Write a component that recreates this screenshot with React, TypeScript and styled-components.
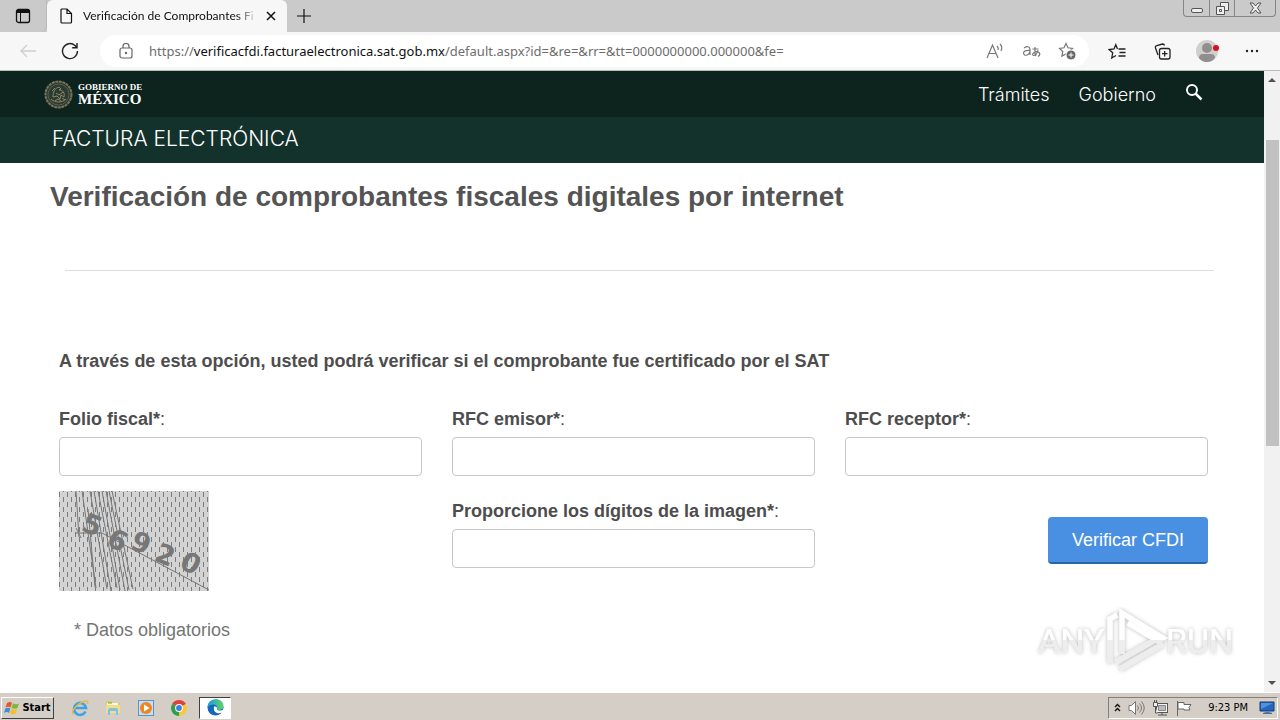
import React from "react";
import styled, { createGlobalStyle } from "styled-components";

const GlobalStyle = createGlobalStyle`
  * { box-sizing: border-box; }
  body { margin: 0; background: #fff; }
  button, input { font: inherit; }
`;

const sans = `"Liberation Sans", Arial, sans-serif`;
const browserFont = `"Noto Sans", "Open Sans", sans-serif`;
const siteFont = `Inter, "Open Sans", sans-serif`;
const systemFont = `"DejaVu Sans Condensed", "DejaVu Sans", sans-serif`;

const Screen = styled.div`
  display: flex;
  flex-direction: column;
  min-height: 100vh;
  font-family: ${sans};
`;

const IconButton = styled.button<{ $width?: number }>`
  display: flex;
  align-items: center;
  justify-content: center;
  width: ${(p) => p.$width ?? 24}px;
  height: 24px;
  padding: 0;
  border: 0;
  background: none;
  color: #222;
  flex: none;
`;

/* Tab strip */
const TabStrip = styled.header`
  display: flex;
  align-items: flex-end;
  height: 32px;
  background: #cacaca;
  font-family: ${browserFont};
`;

const TabMenu = styled.div`
  display: flex;
  align-items: center;
  justify-content: center;
  width: 47px;
  height: 32px;
  border-radius: 0 0 6px 0;
  border-right: 1px solid #b9b9b9;
`;

const Tab = styled.div`
  display: flex;
  align-items: center;
  width: 240px;
  height: 32px;
  padding: 0 2px 0 11px;
  border-radius: 6px 6px 0 0;
  background: #f7f7f7;
`;

const TabTitle = styled.span`
  flex: 1;
  min-width: 0;
  margin-left: 9px;
  white-space: nowrap;
  font-family: Lato, ${browserFont};
  font-size: 12px;
  line-height: 20px;
  color: #111;
  mask-image: linear-gradient(to right, #000 88%, transparent);
`;

const WindowControls = styled.div`
  display: flex;
  align-self: flex-start;
  height: 17px;
  margin: 0 4px 0 auto;
  border: 1px solid #858585;
  border-top: 0;
  border-radius: 0 0 4px 4px;
`;

const WindowButton = styled.button<{ $width: number }>`
  display: flex;
  align-items: center;
  justify-content: center;
  width: ${(p) => p.$width}px;
  padding: 0;
  border: 0;
  background: none;
  & + & { border-left: 1px solid #858585; }
`;

/* Address bar */
const Toolbar = styled.div`
  display: flex;
  align-items: center;
  height: 39px;
  padding: 0 16px;
  border-bottom: 1px solid #b7beba;
  background: #f7f7f7;
`;

const AddressBar = styled.form`
  display: flex;
  flex: 1;
  align-items: center;
  height: 32px;
  min-width: 0;
  margin-right: 16px;
  padding: 0 10px 0 14px;
  border-radius: 16px;
  background: #fff;
`;

const AddressText = styled.div`
  flex: 1;
  min-width: 0;
  margin-left: 11px;
  overflow: hidden;
  white-space: nowrap;
  font-family: ${browserFont};
  font-size: 13px;
  line-height: 20px;
  color: #6d6d6d;
  b { font-weight: 400; color: #111; }
`;

const AddressTools = styled.div`
  display: flex;
  gap: 12px;
`;

const BrowserTools = styled.div`
  display: flex;
  gap: 21px;
`;

/* Page viewport */
const Viewport = styled.div`
  display: flex;
  flex: 1;
`;

const Page = styled.div`
  position: relative;
  flex: 1;
  min-width: 0;
  background: #fff;
`;

const GovernmentBar = styled.div`
  display: flex;
  align-items: center;
  justify-content: space-between;
  height: 46px;
  padding: 0 61px 0 44px;
  background: #0c231e;
`;

const Brand = styled.a`
  display: flex;
  align-items: center;
  gap: 5px;
  color: #fff;
  text-decoration: none;
`;

const BrandText = styled.span`
  display: flex;
  flex-direction: column;
  font-family: "Liberation Serif", serif;
  font-weight: 700;
  font-size: 15px;
  line-height: 14px;
  small { font-size: 9px; line-height: 9px; }
`;

const Nav = styled.nav`
  display: flex;
  align-items: center;
  gap: 29px;
  font-family: ${siteFont};
  font-size: 18px;
  font-weight: 300;
  a { color: #fff; text-decoration: none; }
`;

const SectionBar = styled.div`
  height: 46px;
  padding: 0 52px;
  background: #13322b;
  font-family: ${siteFont};
  font-size: 21px;
  font-weight: 300;
  line-height: 44px;
  color: #fff;
`;

const Title = styled.h1`
  margin: 0;
  padding: 16px 50px 0;
  font-size: 28px;
  line-height: 36px;
  color: #545454;
`;

const Divider = styled.hr`
  height: 1px;
  margin: 55px 50px 0 65px;
  border: 0;
  background: #dedede;
`;

const Content = styled.form`
  padding: 78px 56px 0 59px;
  font-size: 18px;
  line-height: 24px;
  color: #4d4d4d;
`;

const Intro = styled.p`
  margin: 0 0 34px;
  font-weight: 700;
`;

const FieldGrid = styled.div`
  display: grid;
  grid-template-columns: repeat(3, minmax(0, 1fr));
  gap: 15px 30px;
`;

const Field = styled.label`
  display: flex;
  flex-direction: column;
  gap: 6px;
`;

const FieldInput = styled.input`
  width: 100%;
  height: 39px;
  padding: 6px 12px;
  border: 1px solid #c8c8c8;
  border-radius: 4px;
  background: #fff;
  color: #555;
`;

const Captcha = styled.svg`
  display: block;
  width: 150px;
  height: 100px;
`;

const CaptchaField = styled.div`
  padding-top: 8px;
`;

const SubmitCell = styled.div`
  display: flex;
  justify-content: flex-end;
  padding-top: 26px;
`;

const SubmitButton = styled.button`
  width: 160px;
  height: 47px;
  padding: 0;
  border: 0;
  border-bottom: 2px solid #2568a5;
  border-radius: 4px;
  background: #4a90e2;
  color: #fff;
`;

const Required = styled.p`
  margin: 27px 0 0 15px;
  color: #757575;
`;

const Watermark = styled.div`
  position: absolute;
  right: 26px;
  bottom: 16px;
  width: 204px;
  height: 70px;
`;

/* Scroll bar */
const ScrollTrack = styled.div`
  display: flex;
  flex-direction: column;
  align-items: center;
  width: 16px;
  background: #f1f1f1;
`;

const ScrollArrow = styled.div`
  display: flex;
  align-items: center;
  justify-content: center;
  height: 17px;
`;

const ScrollThumb = styled.div`
  width: 13px;
  height: 306px;
  margin: 52px 0 auto;
  background: #c1c1c1;
`;

/* Taskbar */
const Taskbar = styled.footer`
  display: flex;
  align-items: center;
  height: 28px;
  padding: 2px 2px 0 0;
  border-top: 1px solid #fff;
  background: #d5cec6;
  font-family: ${systemFont};
`;

const StartButton = styled.button`
  display: flex;
  align-items: center;
  justify-content: center;
  gap: 1px;
  width: 53px;
  height: 22px;
  margin: 0 13px 0 1px;
  padding: 0;
  border: 1px solid;
  border-color: #fff #404040 #404040 #fff;
  background: #d5cec6;
  font-size: 11px;
  font-weight: 700;
`;

const TaskButton = styled.button<{ $active?: boolean }>`
  display: flex;
  align-items: center;
  justify-content: center;
  width: ${(p) => (p.$active ? 32 : 26)}px;
  height: 22px;
  margin-right: ${(p) => (p.$active ? 0 : 7)}px;
  padding: 0;
  border: 1px solid;
  border-color: ${(p) => (p.$active ? "#404040 #fff #fff #404040" : "transparent")};
  background: ${(p) => (p.$active ? "#fff" : "none")};
`;

const Tray = styled.div`
  display: flex;
  align-items: center;
  gap: 7px;
  height: 22px;
  margin-left: auto;
  padding: 0 2px 0 5px;
  border: 1px solid;
  border-color: #808080 #fff #fff #808080;
  font-size: 11px;
  white-space: nowrap;
`;

const Clock = styled.time`
  margin: 0 4px 0 8px;
`;

const CAPTCHA_LINES = [
  [17, 0, 20, 46], [23, 0, 37, 97], [31, 0, 48, 98], [35, 0, 52, 100],
  [39, 0, 58, 97], [43, 0, 61, 99], [47, 0, 66, 100], [50, 0, 70, 99],
  [53, 0, 74, 98], [29, 18, 36, 96],
];

const CAPTCHA_DIGITS = [
  { digit: "5", x: 21, y: 39, angle: 22 },
  { digit: "6", x: 46, y: 53, angle: 28 },
  { digit: "9", x: 70, y: 57, angle: 22 },
  { digit: "2", x: 94, y: 69, angle: 22 },
  { digit: "0", x: 119, y: 76, angle: 28 },
];

const CaptchaImage = () => (
  <Captcha viewBox="0 0 150 100" role="img" aria-label="Imagen de verificación">
    <defs>
      <pattern id="dashes" width="8" height="10" patternUnits="userSpaceOnUse">
        <path d="M.5 1v5M4.5 0v1M4.5 6v4" stroke="#7c7c7c" />
      </pattern>
    </defs>
    <rect width="150" height="100" fill="#d3d3d3" />
    <rect width="150" height="100" fill="url(#dashes)" />
    <g stroke="#777" strokeWidth="1">
      {CAPTCHA_LINES.map(([x1, y1, x2, y2]) => (
        <line key={`${x1}-${x2}`} x1={x1} y1={y1} x2={x2} y2={y2} />
      ))}
      <path d="M16 42h27L150 99M17 37l5 10" fill="none" />
    </g>
    <g fill="#777" fontFamily="DejaVu Sans, sans-serif" fontSize="27" fontWeight="700">
      {CAPTCHA_DIGITS.map(({ digit, x, y, angle }) => (
        <text key={digit} x={x} y={y} transform={`rotate(${angle} ${x} ${y})`}>{digit}</text>
      ))}
    </g>
  </Captcha>
);

const Seal = () => (
  <svg width="29" height="29" viewBox="0 0 29 29" fill="none" stroke="#77745c">
    <circle cx="14.5" cy="14.5" r="13" fill="#2b3b31" strokeWidth="2" strokeDasharray="3 .6" />
    <circle cx="14.5" cy="14.5" r="10.5" stroke="#5f5d4a" />
    <path d="M7 19c4 4 11 4 15 0M9 17c0-5 2-9 6-10l2 2-2 1c4 0 6 3 5 7l-3-2-1 4-3-3-4 1M12 13l3 2 4-3M8 11l3-3M18 18l3 2M11 21l3-2 3 2" stroke="#8d8769" />
  </svg>
);

const WindowsFlag = () => (
  <svg width="17" height="16" viewBox="0 0 17 16">
    <path d="M3 3q3-2 5 0L6.500 7.500q-2-1.500-5 0z" fill="#e8582a" />
    <path d="M9 3.300q3 1.700 6 .2L13.500 8q-3 1.500-6 0z" fill="#7db83c" />
    <path d="M1.300 8.500q3-1.500 5 0L5 13q-2-1.800-5 0z" fill="#3d8ed8" />
    <path d="M7.200 9q3 1.500 6 0L12 13.500q-3 1.500-6-.2z" fill="#f6bd2b" />
  </svg>
);

const ExplorerIcon = () => (
  <svg width="18" height="18" viewBox="0 0 18 18" fill="none">
    <path d="M14.500 12.500A6 6 0 1 1 15 9H4.500" stroke="#3fa2e4" strokeWidth="2.600" />
    <path d="M2 15.500C-1 13 8 2 15.500 2q2 0 1 3" stroke="#e9b93a" strokeWidth="1.300" />
  </svg>
);

const FolderIcon = () => (
  <svg width="16" height="17" viewBox="0 0 16 17">
    <path d="M1 2h6l1 2h7v10H1z" fill="#e6c766" />
    <path d="M2 4h11v3H2z" fill="#fff8d8" />
    <path d="M1 6h14v8H1z" fill="#f2dc8d" />
    <path d="M3 16v-5q0-2 2-2h6q2 0 2 2v5h-2v-4H5v4z" fill="#7cc3e0" />
    <path d="M3 4h4" stroke="#65a84a" />
  </svg>
);

const PlayerIcon = () => (
  <svg width="16" height="16" viewBox="0 0 16 16">
    <rect x=".5" y=".5" width="15" height="15" fill="#c6def2" stroke="#5b94c9" />
    <circle cx="8" cy="8" r="6" fill="#f28420" />
    <path d="M6 4.500v7L11.500 8z" fill="#fff" />
  </svg>
);

const ChromeIcon = () => (
  <svg width="16" height="16" viewBox="0 0 16 16">
    <path d="M8 8L1.100 4a8 8 0 0 1 13.800 0z" fill="#dd4437" />
    <path d="M8 8l6.900-4A8 8 0 0 1 8 16z" fill="#f8c934" />
    <path d="M8 8v8A8 8 0 0 1 1.100 4z" fill="#2f9e4f" />
    <circle cx="8" cy="8" r="3.900" fill="#fff" />
    <circle cx="8" cy="8" r="2.900" fill="#3d7de4" />
  </svg>
);

const EdgeIcon = () => (
  <svg width="17" height="17" viewBox="0 0 17 17">
    <defs>
      <linearGradient id="edgeTop" x1="0" y1="0" x2="1" y2="0">
        <stop stopColor="#1b9de2" />
        <stop offset="1" stopColor="#5fd264" />
      </linearGradient>
    </defs>
    <circle cx="8.500" cy="8.500" r="8" fill="#1766bd" />
    <path d="M.5 9C.5-2.500 16.500-2 16.500 7q0 4-4.500 4-3 0-2-2c1-4-7-5-9.500 0z" fill="url(#edgeTop)" />
    <path d="M7 7.500q-1 5 3 6.500 3 .8 5.500-.5L17 10q-2 2-5 1.500-3-.5-2-2.500 0-2-3-1.500z" fill="#fff" />
  </svg>
);

const star = "M8 1.5l2 4.3 4.5.6-3.3 3.1.9 4.6L8 11.9l-4.1 2.2.9-4.6L1.5 6.4 6 5.8z";

export default function App() {
  return (
    <Screen>
      <GlobalStyle />
      <TabStrip>
        <TabMenu>
          <IconButton aria-label="Tab actions">
            <svg width="16" height="16" viewBox="0 0 16 16" fill="none" stroke="#111">
              <rect x="1.5" y="1.5" width="13" height="13" rx="2" strokeWidth="1.3" />
              <path d="M2 3.5h12" strokeWidth="3" />
              <path d="M5.5 5v9" />
            </svg>
          </IconButton>
        </TabMenu>
        <Tab>
          <svg width="16" height="16" viewBox="0 0 16 16" fill="none" stroke="#111" strokeWidth="1.2">
            <path d="M4 1h5l4.5 4.5V14a1 1 0 0 1-1 1H4a1 1 0 0 1-1-1V2a1 1 0 0 1 1-1zM9 1v4.5h4.5" />
          </svg>
          <TabTitle>Verificación de Comprobantes Fi</TabTitle>
          <IconButton $width={28} aria-label="Close tab">
            <svg width="10" height="10" viewBox="0 0 10 10" stroke="#111" strokeWidth="1.5"><path d="M1 1l8 8M9 1l-8 8" /></svg>
          </IconButton>
        </Tab>
        <IconButton $width={34} aria-label="New tab">
          <svg width="16" height="32" viewBox="0 0 16 32" stroke="#111" strokeWidth="1.2"><path d="M1 12h14M8 5v14" /></svg>
        </IconButton>
        <WindowControls>
          <WindowButton $width={25} aria-label="Minimize">
            <svg width="12" height="16" viewBox="0 0 12 16" fill="#eee" stroke="#555"><rect x=".5" y="8.5" width="11" height="4" rx="1.5" /></svg>
          </WindowButton>
          <WindowButton $width={25} aria-label="Restore">
            <svg width="13" height="13" viewBox="0 0 13 13" fill="#eee" stroke="#555"><path d="M4.5.5h8v8h-8z" /><path d="M.5 4.5h8v8h-8z" /><path d="M3.5 7.500h2v2h-2z" /></svg>
          </WindowButton>
          <WindowButton $width={41} aria-label="Close">
            <svg width="13" height="12" viewBox="0 0 13 12" fill="#eee" stroke="#555"><path d="M1 1h3l2.500 3L9 1h3L8.500 6l3.500 5H9L6.500 8 4 11H1l3.500-5z" /></svg>
          </WindowButton>
        </WindowControls>
      </TabStrip>

      <Toolbar>
        <IconButton aria-label="Back">
          <svg width="16" height="14" viewBox="0 0 16 14" fill="none" stroke="#cfcfcf" strokeWidth="1.3"><path d="M16 7H1M7 1L1 7l6 6" /></svg>
        </IconButton>
        <IconButton $width={60} aria-label="Refresh">
          <svg width="18" height="18" viewBox="0 0 18 18" fill="none" stroke="#222" strokeWidth="1.4"><path d="M16.500 9A7.500 7.500 0 1 1 14 3.500L16 5.500M16 1v4.800h-4.800" /></svg>
        </IconButton>
        <AddressBar>
          <IconButton aria-label="Site information">
            <svg width="14" height="16" viewBox="0 0 14 16" fill="none" stroke="#666" strokeWidth="1.2"><rect x="1" y="5" width="12" height="10" rx="2" /><path d="M4 5V3.500a3 3 0 0 1 6 0V5" /><circle cx="7" cy="10" r=".6" fill="#666" /></svg>
          </IconButton>
          <AddressText>
            https://<b>verificacfdi.facturaelectronica.sat.gob.mx</b>/default.aspx?id=&amp;re=&amp;rr=&amp;tt=0000000000.000000&amp;fe=
          </AddressText>
          <AddressTools>
            <IconButton aria-label="Read aloud">
              <svg width="18" height="16" viewBox="0 0 18 16" fill="none" stroke="#777" strokeWidth="1.2"><path d="M1 15L6.500 2 12 15M3 10.500h7M11 3q2 2 1 4M14 1q3 3 1 7" /></svg>
            </IconButton>
            <IconButton aria-label="Translate">
              <svg width="19" height="14" viewBox="0 0 19 14" fill="none" stroke="#777" strokeWidth="1.2"><path d="M2 4q5-3 6 1v6M8 6.500Q2 6 1.500 9 2 12 5 11q3-1 3-4M10.500 5h6M13 3v5q0 3 1 4M16 6q-1 5-4 5.500-2 0-1-2 3-3 6-1 2 2-1 4" /></svg>
            </IconButton>
            <IconButton aria-label="Add to favorites">
              <svg width="19" height="19" viewBox="0 0 19 19" fill="none" stroke="#777"><path d={star} strokeWidth="1.2" /><circle cx="13" cy="13" r="5" fill="#666" stroke="#fff" /><path d="M10.500 13h5M13 10.500v5" stroke="#fff" /></svg>
            </IconButton>
          </AddressTools>
        </AddressBar>
        <BrowserTools>
          <IconButton aria-label="Favorites">
            <svg width="18" height="17" viewBox="0 0 18 17" fill="none" stroke="#222" strokeWidth="1.3"><path d="M9.500 6L7.800 1.800 6 6l-4.800.6 3.500 3.200L3.800 15 8 12.500M10.500 6h7M11.500 9.500h6M10.500 13h7" /></svg>
          </IconButton>
          <IconButton aria-label="Collections">
            <svg width="17" height="17" viewBox="0 0 17 17" fill="none" stroke="#222" strokeWidth="1.3"><rect x="5.5" y="5.5" width="10.5" height="10.5" rx="2" /><path d="M10.700 8v5.500M8 10.700h5.500M4 12L1.500 5a2 2 0 0 1 1.300-2.500L8.500 1a2 2 0 0 1 2 1.500" /></svg>
          </IconButton>
          <IconButton aria-label="Profile">
            <svg width="24" height="24" viewBox="0 0 24 24"><circle cx="12" cy="12" r="11" fill="#d0cfcd" /><circle cx="12" cy="9" r="5" fill="#918f8d" /><path d="M4 19q0-4 4-4h8q4 0 4 4-3 4-8 4t-8-4" fill="#918f8d" /><circle cx="21" cy="9" r="3" fill="#d4131c" /></svg>
          </IconButton>
          <IconButton aria-label="Settings and more">
            <svg width="14" height="4" viewBox="0 0 14 4" fill="#222"><circle cx="2" cy="2" r="1.2" /><circle cx="7" cy="2" r="1.2" /><circle cx="12" cy="2" r="1.2" /></svg>
          </IconButton>
        </BrowserTools>
      </Toolbar>

      <Viewport>
        <Page>
          <GovernmentBar>
            <Brand href="#">
              <Seal />
              <BrandText><small>GOBIERNO DE</small>MÉXICO</BrandText>
            </Brand>
            <Nav>
              <a href="#">Trámites</a>
              <a href="#">Gobierno</a>
              <a href="#" aria-label="Buscar">
                <svg width="18" height="18" viewBox="0 0 18 18" fill="none" stroke="#fff"><circle cx="7" cy="7" r="5" strokeWidth="2" /><path d="M10.500 10.500l6 6" strokeWidth="2.5" /></svg>
              </a>
            </Nav>
          </GovernmentBar>
          <SectionBar>FACTURA ELECTRÓNICA</SectionBar>
          <Title>Verificación de comprobantes fiscales digitales por internet</Title>
          <Divider />
          <Content>
            <Intro>A través de esta opción, usted podrá verificar si el comprobante fue certificado por el SAT</Intro>
            <FieldGrid>
              <Field><span><b>Folio fiscal*</b>:</span><FieldInput type="text" /></Field>
              <Field><span><b>RFC emisor*</b>:</span><FieldInput type="text" /></Field>
              <Field><span><b>RFC receptor*</b>:</span><FieldInput type="text" /></Field>
              <CaptchaImage />
              <CaptchaField>
                <Field><span><b>Proporcione los dígitos de la imagen*</b>:</span><FieldInput type="text" /></Field>
              </CaptchaField>
              <SubmitCell><SubmitButton type="button">Verificar CFDI</SubmitButton></SubmitCell>
            </FieldGrid>
            <Required>* Datos obligatorios</Required>
          </Content>
          <Watermark>
            <svg width="204" height="70" viewBox="0 0 204 70" role="img" aria-label="ANY RUN">
              <defs>
                <filter id="soft" x="-10%" y="-10%" width="120%" height="120%">
                  <feDropShadow dx="0" dy="0" stdDeviation="2" floodColor="#000" floodOpacity=".3" />
                </filter>
                <linearGradient id="fade" x1="0" y1="6" x2="0" y2="62" gradientUnits="userSpaceOnUse">
                  <stop offset=".5" stopColor="#fff" />
                  <stop offset=".5" stopColor="#ededed" />
                </linearGradient>
              </defs>
              <g filter="url(#soft)" fill="url(#fade)" fontFamily="Roboto, sans-serif" fontSize="34">
                <text x="4" y="47">ANY</text>
                <text x="132" y="47">RUN</text>
                <path
                  d="M76 57V13l7-4M88 48V7l41 25-5 3-30-18M82 56l46-26M86 63l43-25"
                  fill="none"
                  stroke="url(#fade)"
                  strokeWidth="5"
                />
              </g>
            </svg>
          </Watermark>
        </Page>
        <ScrollTrack>
          <ScrollArrow><svg width="8" height="5" viewBox="0 0 8 5" fill="#505050"><path d="M0 5l4-4 4 4z" /></svg></ScrollArrow>
          <ScrollThumb />
          <ScrollArrow><svg width="8" height="5" viewBox="0 0 8 5" fill="#505050"><path d="M0 0l4 4 4-4z" /></svg></ScrollArrow>
        </ScrollTrack>
      </Viewport>

      <Taskbar>
        <StartButton><WindowsFlag />Start</StartButton>
        <TaskButton aria-label="Internet Explorer"><ExplorerIcon /></TaskButton>
        <TaskButton aria-label="Windows Explorer"><FolderIcon /></TaskButton>
        <TaskButton aria-label="Media Player"><PlayerIcon /></TaskButton>
        <TaskButton aria-label="Chrome"><ChromeIcon /></TaskButton>
        <TaskButton $active aria-label="Edge"><EdgeIcon /></TaskButton>
        <Tray>
          <svg width="7" height="9" viewBox="0 0 7 9" fill="none" stroke="#111" strokeWidth="1.4"><path d="M1 4l2.500-2.500L6 4M1 8l2.500-2.500L6 8" /></svg>
          <svg width="17" height="16" viewBox="0 0 17 16" fill="#fff" stroke="#777"><path d="M1 5.500h2.500l4-4v13l-4-4H1z" /><path d="M9.500 5.500q2 2.500 0 5M11.500 3.500q4 4.500 0 9M13.500 1.500q5.500 6.500 0 13" fill="none" /></svg>
          <svg width="17" height="16" viewBox="0 0 17 16" fill="#f4f4f4" stroke="#555"><rect x="4.5" y="3.5" width="11" height="9" /><path d="M6.500 5.500h7v5h-7z" fill="#bbb" stroke="#888" /><path d="M6 15h9M10 13v2" /><path d="M1.500 2.500h4v4h-4zM2.500 0v2M4.500 0v2M3.500 7v6h2" /></svg>
          <svg width="17" height="16" viewBox="0 0 17 16" fill="#fff" stroke="#666"><path d="M1.500 1v15M2 2.500h6v2h7l-2 3 1 2.500H8V9H2z" /></svg>
          <Clock>9:23 PM</Clock>
          <svg width="16" height="14" viewBox="0 0 16 14"><path d="M1 1h14v9H1z" fill="#2766bd" stroke="#193b70" /><path d="M2 2h12L2 8z" fill="#4f93dd" /><path d="M4 12q4-2 9 0v1H4z" fill="#44719f" /></svg>
        </Tray>
      </Taskbar>
    </Screen>
  );
}
